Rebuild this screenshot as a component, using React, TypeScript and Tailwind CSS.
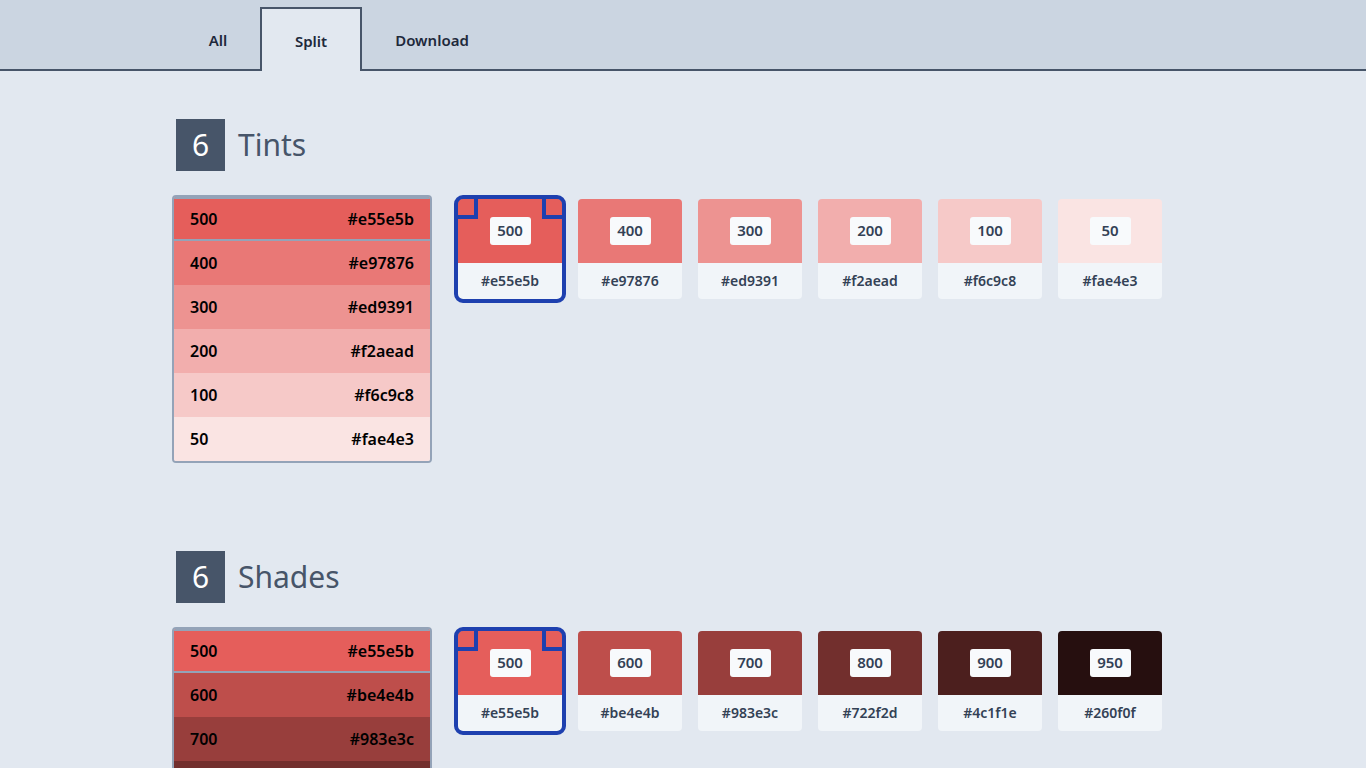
import React from "react";

const tints = [
  ["500", "#e55e5b"],
  ["400", "#e97876"],
  ["300", "#ed9391"],
  ["200", "#f2aead"],
  ["100", "#f6c9c8"],
  ["50", "#fae4e3"],
];
const shades = [
  ["500", "#e55e5b"],
  ["600", "#be4e4b"],
  ["700", "#983e3c"],
  ["800", "#722f2d"],
  ["900", "#4c1f1e"],
  ["950", "#260f0f"],
];

function Section({ title, items, className }: { title: string; items: string[][]; className?: string }) {
  return (
    <section className={className}>
      <div className="flex items-center">
        <div className="w-[49px] h-[52px] bg-[#475569] text-white flex items-center justify-center text-[30px] leading-none">
          6
        </div>
        <h2 className="ml-[13px] text-[30px] leading-none text-[#475569]">{title}</h2>
      </div>
      <div className="mt-6 flex items-start">
        <div className="-ml-1 w-[260px] border-2 border-[#94a3b8] rounded-[4px] overflow-hidden">
          {items.map(([n, hex], i) => (
            <div
              key={n}
              className={
                "h-11 flex items-center justify-between px-4 text-black font-semibold text-[16px] " +
                (i === 0 ? "border-y-2 border-[#94a3b8]" : "")
              }
              style={{ backgroundColor: hex }}
            >
              <span>{n}</span>
              <span>{hex}</span>
            </div>
          ))}
        </div>
        <div className="ml-[22px] p-1 flex gap-4">
          {items.map(([n, hex], i) => (
            <div
              key={n}
              className={
                "relative w-[104px] rounded-[4px] overflow-visible " +
                (i === 0 ? "outline-4 outline-[#1e40af] rounded-[5px]" : "")
              }
            >
              <div
                className="h-16 rounded-t-[4px] flex items-center justify-center pb-px"
                style={{ backgroundColor: hex }}
              >
                <span className="w-[41px] h-7 rounded-[3px] bg-[#f8fafc] flex items-center justify-center text-[15px] font-semibold text-[#334155]">
                  {n}
                </span>
              </div>
              <div className="h-9 rounded-b-[4px] bg-[#f1f5f9] flex items-center justify-center pb-0.5 text-[14px] font-semibold text-[#334155]">
                {hex}
              </div>
              {i === 0 && (
                <>
                  <div className="absolute top-0 left-0 w-5 h-5 border-r-4 border-b-4 border-[#1e40af]" />
                  <div className="absolute top-0 right-0 w-5 h-5 border-l-4 border-b-4 border-[#1e40af]" />
                </>
              )}
            </div>
          ))}
        </div>
      </div>
    </section>
  );
}

export default function App() {
  return (
    <div className="min-h-screen bg-[#e2e8f0] pb-40" style={{ fontFamily: '"Noto Sans", "Open Sans", sans-serif' }}>
      <div className="bg-[#cbd5e1] border-b-2 border-[#475569] h-[71px]">
        <div className="mx-auto w-[1014px] h-full flex items-end">
          <div className="flex h-16 -mb-[2px]">
            <button className="w-[84px] h-full pt-0.5 flex items-center justify-center text-[15px] font-semibold text-[#1e293b]">All</button>
            <button className="w-[102px] h-full pt-0.5 flex items-center justify-center text-[15px] font-semibold text-[#1e293b] bg-[#e2e8f0] border-2 border-b-0 border-[#475569]">
              Split
            </button>
            <button className="w-[140px] h-full pt-0.5 flex items-center justify-center text-[15px] font-semibold text-[#1e293b]">Download</button>
          </div>
        </div>
      </div>
      <div className="mx-auto w-[1014px] pt-12">
        <Section title="Tints" items={tints} />
        <Section title="Shades" items={shades} className="mt-[88px]" />
      </div>
    </div>
  );
}
